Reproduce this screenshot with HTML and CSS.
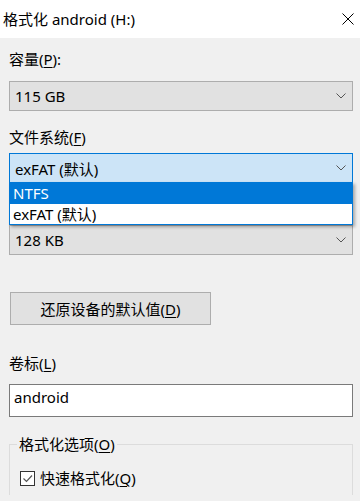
FILE: index.html
```html
<!DOCTYPE html>
<html lang="zh-CN">
<head>
    <meta charset="UTF-8">
    <meta name="viewport" content="width=device-width, initial-scale=1.0">
    <title>格式化 android (H:)</title>
    <link rel="stylesheet" href="styles.css">
</head>
<body>

    <div class="titlebar">
        <span class="title">格式化 android (H:)</span>
        <svg class="close" width="12" height="12" viewBox="0 0 12 12">
            <path d="M0.5 0.5 L11.5 11.5 M11.5 0.5 L0.5 11.5" stroke="#000" stroke-width="1" fill="none"/>
        </svg>
    </div>

    <div class="content">
        <div class="label first">容量(<u>P</u>):</div>
        <div class="combo">
            <span>115 GB</span>
            <svg class="chevron" width="10" height="6" viewBox="0 0 10 6"><path d="M0.5 0.5 L5 5 L9.5 0.5" stroke="#555" fill="none"/></svg>
        </div>

        <div class="label">文件系统(<u>F</u>)</div>
        <div class="combo focused">
            <span>exFAT (默认)</span>
            <svg class="chevron" width="10" height="6" viewBox="0 0 10 6"><path d="M0.5 0.5 L5 5 L9.5 0.5" stroke="#555" fill="none"/></svg>
            <div class="dropdown">
                <div class="option selected">NTFS</div>
                <div class="option">exFAT (默认)</div>
            </div>
        </div>

        <!-- caché derrière la liste déroulante -->
        <div class="label covered">分配单元大小(<u>A</u>)</div>
        <div class="combo">
            <span>128 KB</span>
            <svg class="chevron" width="10" height="6" viewBox="0 0 10 6"><path d="M0.5 0.5 L5 5 L9.5 0.5" stroke="#555" fill="none"/></svg>
        </div>

        <button class="reset">还原设备的默认值(<u>D</u>)</button>

        <div class="label volume">卷标(<u>L</u>)</div>
        <div class="textbox">android</div>

        <fieldset class="group">
            <legend>格式化选项(<u>O</u>)</legend>
            <div class="check-row">
                <span class="checkbox">
                    <svg width="13" height="13" viewBox="0 0 13 13"><path d="M2.5 6.5 L5.5 9.5 L11 3.5" stroke="#555" stroke-width="1.2" fill="none"/></svg>
                </span>
                <span>快速格式化(<u>Q</u>)</span>
            </div>
        </fieldset>
    </div>

</body>
</html>
```

FILE: styles.css
```css
body {
    margin: 0;
    width: 360px;
    height: 501px;
    overflow: hidden;
    background-color: #f0f0f0;
    font-family: "Noto Sans", "Noto Sans CJK SC", sans-serif;
    font-size: 15px;
    color: #000;
}
u {
    text-decoration-thickness: 1px;
    text-underline-offset: 2px;
}
.titlebar {
    height: 38px;
    background-color: #fff;
    display: flex;
    align-items: center;
    justify-content: space-between;
    padding: 0 6px 0 3px;
}
.title {
    line-height: 20px;
}
.content {
    padding: 0 7px 0 9px;
}
.label {
    line-height: 20px;
    margin-top: 16px;
}
.label.first {
    margin-top: 11px;
}
.label.covered {
    visibility: hidden;
}
.label.volume {
    margin-top: 28px;
}
.combo {
    position: relative;
    box-sizing: border-box;
    height: 30px;
    margin-top: 6px;
    display: flex;
    align-items: center;
    justify-content: space-between;
    padding: 0 6px 0 5px;
    background-color: #e1e1e1;
    border: 1px solid #adadad;
}
.label.first + .combo {
    margin-top: 12px;
}
.combo.focused {
    background-color: #cce4f7;
    border-color: #0078d7;
}
.dropdown {
    position: absolute;
    top: 28px;
    left: -1px;
    right: -1px;
    background-color: #fff;
    border: 1px solid #0078d7;
    box-shadow: 2px 2px 3px rgba(0, 0, 0, 0.3);
    z-index: 2;
}
.option {
    height: 20px;
    line-height: 20px;
    padding-left: 3px;
}
.option.selected {
    height: 21px;
    background-color: #0078d7;
    color: #fff;
}
.reset {
    display: block;
    box-sizing: border-box;
    width: 201px;
    height: 33px;
    margin: 37px 0 0 1px;
    padding: 0;
    background-color: #e1e1e1;
    border: 1px solid #adadad;
    font-family: inherit;
    font-size: 15px;
    color: #000;
}
.textbox {
    box-sizing: border-box;
    height: 33px;
    margin-top: 11px;
    padding: 0 4px;
    line-height: 25px;
    background-color: #fff;
    border: 1px solid #7a7a7a;
}
.group {
    margin: 17px 0 0 0;
    padding: 0;
    height: 60px;
    border: 1px solid #dcdcdc;
    border-bottom: none;
    min-width: 0;
}
.group legend {
    margin-left: 7px;
    padding: 0 2px;
    line-height: 20px;
}
.check-row {
    display: flex;
    align-items: center;
    gap: 5px;
    margin: 14px 0 0 10px;
    line-height: 20px;
}
.checkbox {
    box-sizing: border-box;
    width: 15px;
    height: 15px;
    border: 1px solid #333;
    background-color: #fff;
    display: flex;
    align-items: center;
    justify-content: center;
}
```
